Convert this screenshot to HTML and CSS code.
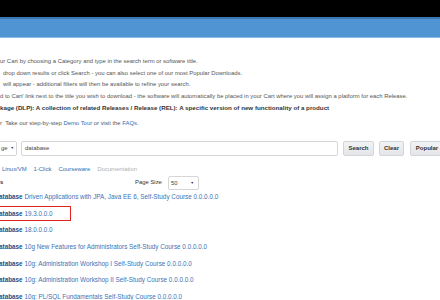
FILE: index.html
```html
<!DOCTYPE html>
<html>
<head>
<meta charset="utf-8">
<link rel="stylesheet" href="styles.css">
</head>
<body>
<div class="topbar"></div>
<div class="navbar"></div>
<main class="page">
  <div class="intro">
    <p>ur Cart by choosing a Category and type in the search term or software title.</p>
    <p class="ind">drop down results or click Search - you can also select one of our most Popular Downloads.</p>
    <p class="ind">will appear - additional filters will then be available to refine your search.</p>
    <p>d to Cart' link next to the title you wish to download - the software will automatically be placed in your Cart where you will assign a platform for each Release.</p>
    <p class="bold">kage (DLP): A collection of related Releases / Release (REL): A specific version of new functionality of a product</p>
    <p class="tour">r&nbsp; Take our step-by-step <a href="#">Demo Tour</a> or visit the <a href="#">FAQs</a>.</p>
  </div>
  <div class="searchrow">
    <div class="cat"><span>ge</span><span class="caret">&#9660;</span></div>
    <div class="input">database</div>
    <button class="btn btn-search">Search</button>
    <button class="btn btn-clear">Clear</button>
    <button class="btn btn-popular">Popular</button>
  </div>
  <div class="filters">
    <a href="#">Linux/VM</a>
    <a href="#">1-Click</a>
    <a href="#">Courseware</a>
    <span class="muted">Documentation</span>
  </div>
  <div class="resbar">
    <span class="resl">s</span>
    <span class="pslabel">Page Size</span>
    <div class="pssel"><span>50</span><span class="caret">&#9660;</span></div>
  </div>
  <ul class="results">
    <li><a href="#"><b>atabase</b> Driven Applications with JPA, Java EE 6, Self-Study Course 0.0.0.0.0</a></li>
    <li><span class="hl"><a href="#"><b>atabase</b> 19.3.0.0.0</a></span></li>
    <li><a href="#"><b>atabase</b> 18.0.0.0.0</a></li>
    <li><a href="#"><b>atabase</b> 10g New Features for Administrators Self-Study Course 0.0.0.0.0</a></li>
    <li><a href="#"><b>atabase</b> 10g: Administration Workshop I Self-Study Course 0.0.0.0.0</a></li>
    <li><a href="#"><b>atabase</b> 10g: Administration Workshop II Self-Study Course 0.0.0.0.0</a></li>
    <li><a href="#"><b>atabase</b> 10g: PL/SQL Fundamentals Self-Study Course 0.0.0.0.0</a></li>
  </ul>
</main>
</body>
</html>
```
FILE: styles.css
```css
html, body {
  margin: 0;
  padding: 0;
  width: 440px;
  height: 300px;
  overflow: hidden;
  background: #ffffff;
  font-family: "Liberation Sans", Arial, sans-serif;
}
.topbar {
  height: 17px;
  background: #000000;
}
.navbar {
  height: 18px;
  background: #5194d3;
  border-top: 2px solid #3e78b4;
  border-bottom: 1px solid #8cbbe6;
}
.page {
  padding-top: 18px;
  color: #555555;
}
.intro p {
  margin: 0;
  font-size: 5.9px;
  line-height: 11.5px;
  white-space: nowrap;
}
.intro p.ind {
  padding-left: 3px;
}
.intro p.bold {
  font-weight: bold;
  font-size: 6.2px;
  color: #333333;
}
.intro p.tour {
  margin-top: 4.5px;
}
a {
  color: #2f6db5;
  text-decoration: none;
}
.searchrow {
  display: flex;
  align-items: center;
  height: 15px;
  margin-top: 11px;
}
.searchrow > * {
  flex-shrink: 0;
}
.cat {
  box-sizing: border-box;
  height: 15px;
  width: 19px;
  margin-left: -2px;
  padding-left: 2px;
  border: 1px solid #d6d6d6;
  border-radius: 2px;
  display: flex;
  align-items: center;
  justify-content: space-between;
  padding-right: 2px;
  font-size: 5.9px;
  color: #444;
}
.caret {
  font-size: 3.5px;
  color: #333;
}
.input {
  box-sizing: border-box;
  height: 15px;
  width: 317px;
  margin-left: 4px;
  border: 1px solid #d6d6d6;
  border-radius: 2px;
  display: flex;
  align-items: center;
  padding-left: 3px;
  font-size: 5.9px;
  color: #444;
}
.btn {
  box-sizing: border-box;
  height: 15px;
  margin: 0;
  padding: 0;
  border: 1px solid #d2d5d8;
  border-radius: 2px;
  background: linear-gradient(#f2f3f5, #e3e5e8);
  font-family: "Liberation Sans", Arial, sans-serif;
  font-weight: bold;
  font-size: 6px;
  color: #333;
}
.btn-search { width: 31px; margin-left: 5px; }
.btn-clear { width: 25px; margin-left: 5px; }
.btn-popular { width: 34px; margin-left: 6px; }
.filters {
  margin-top: 8.5px;
  height: 11px;
  line-height: 11px;
  font-size: 5.9px;
  padding-left: 2px;
  display: flex;
  gap: 7px;
}
.muted { color: #b0b0b0; }
.resbar {
  margin-top: 1.83px;
  height: 11.33px;
  display: flex;
  align-items: center;
  font-size: 5.9px;
}
.resl {
  font-weight: bold;
  color: #333;
  width: 135px;
}
.pslabel {
  color: #333;
  width: 33px;
}
.pssel {
  box-sizing: border-box;
  width: 31px;
  height: 14px;
  border: 1px solid #d6d6d6;
  border-radius: 2px;
  display: flex;
  align-items: center;
  justify-content: space-between;
  padding: 0 4px 0 2px;
  color: #444;
}
.results {
  list-style: none;
  margin: 0;
  padding: 0;
}
.results li {
  height: 16.67px;
  display: flex;
  align-items: center;
  font-size: 6.35px;
  white-space: nowrap;
  margin-left: -1px;
}
.results b {
  color: #1f4f86;
}
.results a {
  color: #3a73b5;
}
.hl {
  box-sizing: border-box;
  display: inline-flex;
  align-items: center;
  height: 15px;
  width: 83px;
  margin-left: -11px;
  padding-left: 10px;
  border: 1.5px solid #e2231a;
  margin-top: 1px;
}
```
